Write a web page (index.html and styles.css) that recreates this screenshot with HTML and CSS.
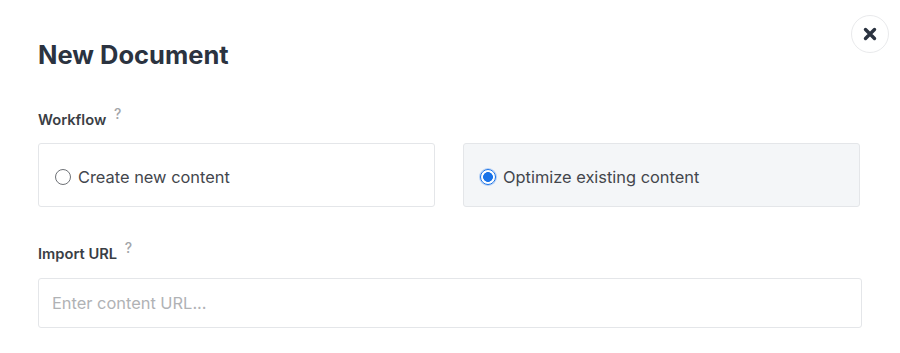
FILE: index.html
```html
<!DOCTYPE html>
<html lang="en">
<head>
<meta charset="utf-8">
<title>New Document</title>
<link rel="stylesheet" href="styles.css">
</head>
<body>
<div class="modal">
  <button class="close" aria-label="Close">
    <svg width="14" height="14" viewBox="0 0 14 14"><path d="M2.5 2.5 L11.5 11.5 M11.5 2.5 L2.5 11.5" stroke="#2b3340" stroke-width="3.4" stroke-linecap="round"/></svg>
  </button>
  <h1 class="title">New Document</h1>
  <div class="field">
    <div class="label">Workflow <span class="help">?</span></div>
    <div class="options">
      <label class="option">
        <input type="radio" name="wf" class="radio">
        <span>Create new content</span>
      </label>
      <label class="option option-active">
        <input type="radio" name="wf" class="radio" checked>
        <span>Optimize existing content</span>
      </label>
    </div>
  </div>
  <div class="field field-url">
    <div class="label">Import URL <span class="help">?</span></div>
    <input class="url" type="text" placeholder="Enter content URL...">
  </div>
</div>
</body>
</html>
```
FILE: styles.css
```css
* { box-sizing: border-box; }
html, body { margin: 0; background: #fff; }
body { font-family: Inter, Roboto, "Liberation Sans", Arial, sans-serif; }

.modal {
  position: relative;
  width: 900px;
  height: 353px;
  padding: 40px 38px 0 38px;
}

.close {
  position: absolute;
  top: 15px;
  left: 851px;
  width: 38px;
  height: 38px;
  border-radius: 50%;
  border: 1px solid #e9eaec;
  background: #fff;
  padding: 0;
  display: flex;
  align-items: center;
  justify-content: center;
}

.title {
  margin: 0;
  font-size: 25.5px;
  line-height: 30px;
  font-weight: 700;
  color: #2b3340;
}

.field { margin-top: 40px; }
.field-url { margin-top: 37px; }

.label {
  font-size: 14.7px;
  line-height: 20px;
  font-weight: 600;
  color: #3a3e45;
}

.help {
  position: relative;
  top: -6px;
  margin-left: 4px;
  font-size: 14px;
  font-weight: 500;
  color: #a2a5a9;
}

.options {
  margin-top: 13px;
  display: grid;
  grid-template-columns: 397px 397px;
  column-gap: 28px;
}

.option {
  height: 64px;
  display: flex;
  align-items: center;
  gap: 7px;
  padding-left: 16px;
  padding-top: 4px;
  border: 1px solid #e4e6e9;
  border-radius: 3px;
  background: #fff;
  font-size: 16.4px;
  color: #43464c;
}

.option-active { background: #f4f6f8; }

.radio {
  appearance: none;
  -webkit-appearance: none;
  margin: 0;
  width: 16px;
  height: 16px;
  border-radius: 50%;
  border: 1.5px solid #6e7176;
  background: #fff;
  flex: none;
}

.radio:checked {
  border: 1.5px solid #1a73e8;
  background: radial-gradient(circle, #1a73e8 0 4.6px, #fff 5.2px);
  box-shadow: 0 0 0 1px #b7d1f5;
}

.url {
  display: block;
  margin-top: 14px;
  width: 824px;
  height: 50px;
  border: 1px solid #e4e6e9;
  border-radius: 3px;
  padding: 0 13px;
  font-family: Inter, Roboto, "Liberation Sans", Arial, sans-serif;
  font-size: 16.4px;
  color: #333;
  outline: none;
}

.url::placeholder { color: #b0b2b5; }
```
